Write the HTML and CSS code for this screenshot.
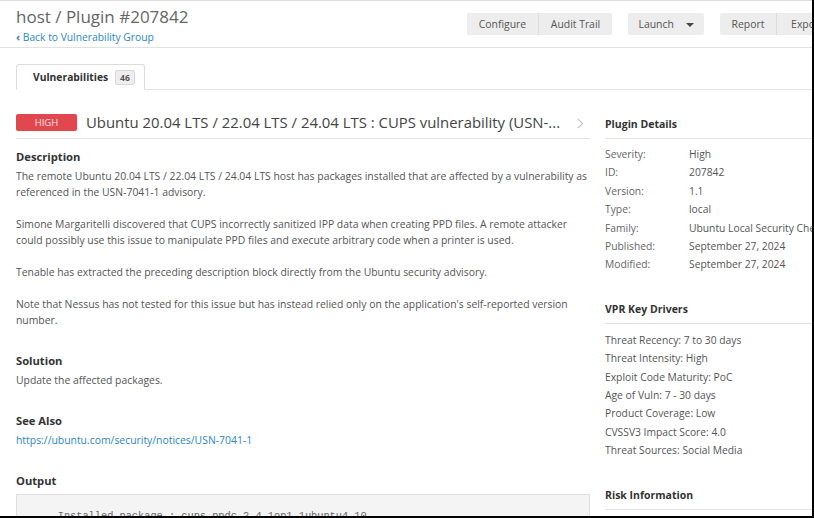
FILE: index.html
```html
<!DOCTYPE html>
<html lang="en">
<head>
<meta charset="utf-8">
<title>host / Plugin #207842</title>
<link rel="stylesheet" href="styles.css">
</head>
<body>
<div class="viewport">
  <div class="page">
    <header class="header">
      <div class="title-block">
        <h1 class="title">host / Plugin #207842</h1>
        <a class="back" href="#"><span class="back-icon">‹</span> Back to Vulnerability Group</a>
      </div>
      <div class="toolbar">
        <div class="btn-group">
          <button class="btn w-configure">Configure</button>
          <button class="btn w-audit">Audit Trail</button>
        </div>
        <div class="btn-group">
          <button class="btn btn-launch">Launch <span class="caret"></span></button>
        </div>
        <div class="btn-group">
          <button class="btn w-report">Report</button>
          <button class="btn w-export">Export</button>
        </div>
      </div>
    </header>

    <div class="content">
      <div class="tabs">
        <div class="tab">Vulnerabilities <span class="count">46</span></div>
      </div>

      <div class="layout">
        <main class="main">
          <div class="vuln-head">
            <span class="sev">HIGH</span>
            <span class="vuln-title">Ubuntu 20.04 LTS / 22.04 LTS / 24.04 LTS : CUPS vulnerability (USN-...</span>
            <span class="chev">
              <svg width="7" height="11" viewBox="0 0 7 11"><path d="M1 1l4.5 4.5L1 10" fill="none" stroke="#c4c4c4" stroke-width="1.1"/></svg>
            </span>
          </div>

          <section class="section first">
            <h2>Description</h2>
            <p>The remote Ubuntu 20.04 LTS / 22.04 LTS / 24.04 LTS host has packages installed that are affected by a vulnerability as referenced in the USN-7041-1 advisory.</p>
            <p>Simone Margaritelli discovered that CUPS incorrectly sanitized IPP data when creating PPD files. A remote attacker could possibly use this issue to manipulate PPD files and execute arbitrary code when a printer is used.</p>
            <p>Tenable has extracted the preceding description block directly from the Ubuntu security advisory.</p>
            <p>Note that Nessus has not tested for this issue but has instead relied only on the application's self-reported version number.</p>
          </section>

          <section class="section">
            <h2>Solution</h2>
            <p>Update the affected packages.</p>
          </section>

          <section class="section">
            <h2>See Also</h2>
            <p><a class="link" href="#">https://ubuntu.com/security/notices/USN-7041-1</a></p>
          </section>

          <section class="section">
            <h2>Output</h2>
            <pre class="output">  - Installed package : cups-ppdc_2.4.1op1-1ubuntu4.10</pre>
          </section>
        </main>

        <aside class="side">
          <div class="panel">
            <h3 class="panel-title">Plugin Details</h3>
            <dl class="details">
              <dt>Severity:</dt><dd>High</dd>
              <dt>ID:</dt><dd>207842</dd>
              <dt>Version:</dt><dd>1.1</dd>
              <dt>Type:</dt><dd>local</dd>
              <dt>Family:</dt><dd>Ubuntu Local Security Checks</dd>
              <dt>Published:</dt><dd>September 27, 2024</dd>
              <dt>Modified:</dt><dd>September 27, 2024</dd>
            </dl>
          </div>
          <div class="panel">
            <h3 class="panel-title">VPR Key Drivers</h3>
            <ul class="drivers">
              <li>Threat Recency: 7 to 30 days</li>
              <li>Threat Intensity: High</li>
              <li>Exploit Code Maturity: PoC</li>
              <li>Age of Vuln: 7 - 30 days</li>
              <li>Product Coverage: Low</li>
              <li>CVSSV3 Impact Score: 4.0</li>
              <li>Threat Sources: Social Media</li>
            </ul>
          </div>
          <div class="panel">
            <h3 class="panel-title">Risk Information</h3>
          </div>
        </aside>
      </div>
    </div>
  </div>
</div>
</body>
</html>
```
FILE: styles.css
```css
html, body {
  margin: 0;
  padding: 0;
  background: #000;
}

body {
  font-family: "Open Sans", "Liberation Sans", sans-serif;
  color: #555;
}

.viewport {
  width: 812px;
  height: 516px;
  overflow: hidden;
  background: #fff;
}

.page {
  width: 853px;
  border-top: 1px solid #dcdcdc;
}

.header {
  display: flex;
  justify-content: space-between;
  align-items: flex-start;
  padding: 0 16px;
  height: 46px;
  border-bottom: 1px solid #e2e2e2;
}

.title {
  margin: 4px 0 0;
  font-size: 17px;
  font-weight: 400;
  line-height: 24px;
  color: #666;
}

.back {
  display: block;
  font-size: 10.3px;
  line-height: 16px;
  color: #2b86c5;
  text-decoration: none;
}

.back-icon {
  font-weight: 700;
  font-size: 11px;
}

.toolbar {
  display: flex;
  gap: 16px;
  margin-top: 12px;
}

.btn-group {
  display: flex;
}

.btn {
  font-family: inherit;
  font-size: 10.4px;
  color: #555;
  background: #ededed;
  border: none;
  border-left: 1px solid #dcdcdc;
  height: 22px;
  padding: 0;
  border-radius: 0;
  white-space: nowrap;
  text-align: center;
}

.btn:first-child {
  border-left: none;
  border-radius: 2px 0 0 2px;
}

.btn:last-child {
  border-radius: 0 2px 2px 0;
}

.btn:only-child {
  border-radius: 2px;
}

.w-configure { width: 71px; }
.w-audit { width: 74px; }
.w-report { width: 56px; }
.w-export { width: 61px; }

.btn-launch {
  width: 76px;
}

.caret {
  display: inline-block;
  width: 0;
  height: 0;
  margin-left: 9px;
  vertical-align: middle;
  border-left: 4px solid transparent;
  border-right: 4px solid transparent;
  border-top: 4px solid #444;
}

.content {
  padding: 0 16px;
}

.tabs {
  margin-top: 16px;
  border-bottom: 1px solid #e2e2e2;
  display: flex;
}

.tab {
  display: flex;
  align-items: center;
  gap: 7px;
  height: 24px;
  padding: 0 9px 0 16px;
  margin-bottom: -1px;
  background: #fff;
  border: 1px solid #dcdcdc;
  border-bottom-color: #fff;
  border-radius: 3px 3px 0 0;
  font-size: 10.3px;
  font-weight: 700;
  color: #333;
}

.count {
  font-size: 8.5px;
  font-weight: 700;
  color: #555;
  background: #eee;
  border: 1px solid #d8d8d8;
  border-radius: 2px;
  padding: 0 4px;
  line-height: 13px;
}

.layout {
  display: grid;
  grid-template-columns: 574px 1fr;
  column-gap: 15px;
  margin-top: 16px;
}

.vuln-head {
  display: flex;
  align-items: center;
  height: 32px;
  border-bottom: 1px solid #e2e2e2;
}

.sev {
  display: inline-block;
  width: 61px;
  height: 17px;
  line-height: 17px;
  text-align: center;
  background: #e0474f;
  color: #fbe5e6;
  font-size: 9.5px;
  border-radius: 2px;
  flex: none;
}

.vuln-title {
  margin-left: 9px;
  font-size: 14.9px;
  color: #444;
  white-space: nowrap;
  flex: 1;
  overflow: hidden;
}

.chev {
  display: flex;
  width: 7px;
  margin-right: 6px;
  margin-top: 3px;
}

.section {
  margin-top: 24px;
}

.section.first {
  margin-top: 9px;
}

.section h2 {
  margin: 0 0 2px;
  font-size: 11.2px;
  font-weight: 700;
  line-height: 18px;
  color: #333;
}

.section p {
  margin: 0 0 16px;
  font-size: 10.4px;
  line-height: 16px;
  color: #555;
}

.section p:last-child {
  margin-bottom: 0;
}

.link {
  color: #2b86c5;
  text-decoration: none;
}

.output {
  margin: 4px 0 0;
  padding: 12px 16px 20px;
  background: #f4f4f4;
  border: 1px solid #e0e0e0;
  font-family: "Liberation Mono", "DejaVu Sans Mono", monospace;
  font-size: 10.3px;
  line-height: 18px;
  color: #666;
}

.panel {
  margin-bottom: 17px;
}

.panel-title {
  margin: 0;
  font-size: 10.5px;
  font-weight: 700;
  line-height: 18px;
  padding-top: 9px;
  padding-bottom: 5px;
  color: #333;
  border-bottom: 1px solid #e2e2e2;
  white-space: nowrap;
}

.details {
  display: grid;
  grid-template-columns: 84px 1fr;
  margin: 6px 0 0;
  font-size: 10.3px;
  line-height: 18.4px;
}

.details dt {
  color: #666;
}

.details dd {
  margin: 0;
  color: #555;
  white-space: nowrap;
}

.drivers {
  list-style: none;
  margin: 7px 0 0;
  padding: 0;
  font-size: 10.3px;
  line-height: 18.4px;
  color: #555;
}
```
